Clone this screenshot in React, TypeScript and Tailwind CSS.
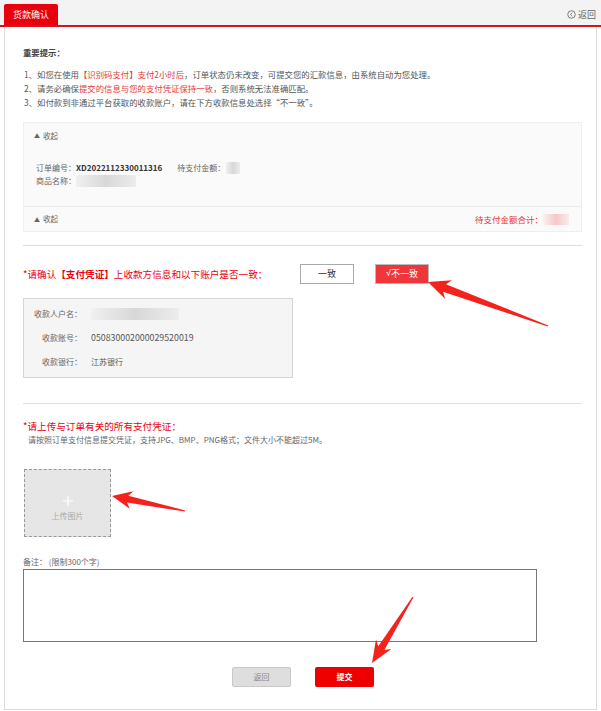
import React from 'react';

type Pt = [number, number];

// arrow polygon from tail to tip, tapering shaft + wide head
const arrowPoints = (tail: Pt, tip: Pt, headLen: number, headW: number, shaftW: number) => {
  const dx = tip[0] - tail[0];
  const dy = tip[1] - tail[1];
  const len = Math.hypot(dx, dy);
  const ux = dx / len;
  const uy = dy / len;
  const nx = -uy;
  const ny = ux;
  const bx = tip[0] - ux * headLen;
  const by = tip[1] - uy * headLen;
  const nbx = tip[0] - ux * headLen * 0.8;
  const nby = tip[1] - uy * headLen * 0.8;
  const pts: Pt[] = [
    tip,
    [bx + nx * headW, by + ny * headW],
    [nbx + nx * shaftW, nby + ny * shaftW],
    [tail[0] + nx * 0.6, tail[1] + ny * 0.6],
    [tail[0] - nx * 0.6, tail[1] - ny * 0.6],
    [nbx - nx * shaftW, nby - ny * shaftW],
    [bx - nx * headW, by - ny * headW],
  ];
  return pts.map((p) => `${p[0].toFixed(1)},${p[1].toFixed(1)}`).join(' ');
};

const Blur = ({ w, h = 11, className = '' }: { w: number; h?: number; className?: string }) => (
  <span
    className={`inline-block align-middle rounded-[2px] bg-gradient-to-r from-[#f0f0f0] via-[#d8d8d8] to-[#ececec] ${className}`}
    style={{ width: w, height: h }}
  />
);

const App: React.FC = () => {
  return (
    <div
      className="relative w-[601px] h-[711px] bg-white text-[#555] overflow-hidden"
      style={{ fontFamily: '"Noto Sans CJK SC", "Noto Sans", sans-serif' }}
    >
      {/* top tab bar */}
      <div className="h-[27px] bg-[#f3f3f3] border-b-2 border-[#d7141a] flex items-end justify-between">
        <div className="ml-[4px] h-[21px] w-[54px] bg-[#e8000f] rounded-t-[2px] flex items-center justify-center text-white text-[9px]">
          货款确认
        </div>
        <div className="self-center mt-[4px] mr-[5px] flex items-center gap-[2px] text-[9px] text-[#666]">
          <svg width="9" height="9" viewBox="0 0 10 10" fill="none" stroke="#666" strokeWidth="0.9">
            <circle cx="5" cy="5" r="4.2" />
            <path d="M5.8 3 L3.8 5 L5.8 7" />
          </svg>
          返回
        </div>
      </div>

      {/* main panel */}
      <div className="mx-[4px] h-[683px] border-x border-b border-[#dcdcdc] pl-[18px] pr-[14px] text-[8.4px]">
        <div className="pt-[18px] h-[14px] leading-[14px] box-content font-bold text-[#444]">重要提示：</div>
        <div className="mt-[8px] pl-[1px] leading-[14px] text-[#555]">
          <div>
            1、如您在使用<span className="text-[#e4393c]">【识别码支付】支付2小时后</span>，订单状态仍未改变，可提交您的汇款信息，由系统自动为您处理。
          </div>
          <div>
            2、请务必确保<span className="text-[#e4393c]">提交的信息与您的支付凭证保持一致</span>，否则系统无法准确匹配。
          </div>
          <div>3、如付款到非通过平台获取的收款账户，请在下方收款信息处选择“不一致”。</div>
        </div>

        {/* order box */}
        <div className="mt-[13px] h-[110px] bg-[#fafafa] border border-[#efefef] flex flex-col text-[#666]">
          <div className="h-[25px] flex items-center pl-[10px] text-[7.5px]">
            <span className="text-[6px] mr-[3px]">▲</span>收起
          </div>
          <div className="flex-1 pl-[12px] pt-[13px] leading-[13px] text-[8px]">
            <div className="flex items-center">
              <span>订单编号：</span>
              <span className="font-bold text-[#333]">XD2022112330011316</span>
              <span className="ml-[15px]">待支付金额：</span>
              <Blur w={14} h={12} className="ml-[1px]" />
            </div>
            <div className="flex items-center">
              <span>商品名称：</span>
              <Blur w={60} h={12} />
            </div>
          </div>
          <div className="h-[25px] border-t border-[#ececec] flex items-center justify-between pl-[10px] pr-[12px] text-[7.5px]">
            <span>
              <span className="text-[6px] mr-[3px]">▲</span>收起
            </span>
            <span className="flex items-center text-[#e4393c] text-[8.5px]">
              待支付金额合计：
              <span className="inline-block w-[26px] h-[11px] bg-gradient-to-r from-[#fdf0f0] via-[#f5c8c8] to-[#fbeaea]" />
            </span>
          </div>
        </div>

        <div className="mt-[13px] border-t border-[#dedede]" />

        {/* confirm row */}
        <div className="mt-[18px] h-[20px] flex items-center">
          <div className="w-[277px] text-[9.6px] text-[#e8000f]">
            *请确认<span className="font-bold">【支付凭证】</span>上收款方信息和以下账户是否一致：
          </div>
          <div className="w-[54px] h-[20px] border border-[#aaa] bg-white text-[#333] text-[9px] flex items-center justify-center">
            一致
          </div>
          <div className="ml-[21px] w-[54px] h-[20px] border border-[#bbb] bg-[#f0363a] text-white text-[9px] flex items-center justify-center">
            <span style={{ fontFamily: '"Liberation Sans", sans-serif' }}>√</span>不一致
          </div>
        </div>

        {/* account box */}
        <div className="mt-[14px] w-[270px] h-[80px] bg-[#f5f5f5] border border-[#d5d5d5] flex flex-col justify-center gap-[10px] text-[8px] text-[#666]">
          <div className="flex items-center h-[14px]">
            <span className="w-[67px] pl-[10px]">收款人户名：</span>
            <Blur w={88} h={12} />
          </div>
          <div className="flex items-center h-[14px]">
            <span className="w-[67px] pl-[18px]">收款账号：</span>
            <span className="text-[#555] text-[8.8px]">050830002000029520019</span>
          </div>
          <div className="flex items-center h-[14px]">
            <span className="w-[67px] pl-[18px]">收款银行：</span>
            <span className="text-[#555]">江苏银行</span>
          </div>
        </div>

        <div className="mt-[25px] border-t border-[#dedede]" />

        {/* upload */}
        <div className="mt-[15px] leading-[14px] text-[9.6px] text-[#e8000f]">*请上传与订单有关的所有支付凭证：</div>
        <div className="pl-[5px] leading-[14px] text-[8px] text-[#666]">
          请按照订单支付信息提交凭证，支持JPG、BMP、PNG格式；文件大小不能超过5M。
        </div>
        <div className="mt-[22px] ml-[1px] w-[87px] h-[68px] bg-[#e6e6e6] border border-dashed border-[#999] flex flex-col items-center justify-center gap-[4px]">
          <svg className="mt-[12px]" width="10" height="10" viewBox="0 0 10 10" stroke="#fff" strokeWidth="1.2">
            <path d="M5 0 V10 M0 5 H10" />
          </svg>
          <span className="text-[8px] text-[#aaa] leading-[12px]">上传图片</span>
        </div>

        {/* remark */}
        <div className="mt-[18px] leading-[14px] text-[8px] text-[#666]">
          备注：&nbsp;(限制300个字)
        </div>
        <div className="w-[514px] h-[73px] border border-[#777] bg-white" />

        <div className="mt-[25px] flex justify-center gap-[24px] pl-[1px]">
          <div className="w-[59px] h-[20px] rounded-[2px] bg-[#dedede] border border-[#c8c8c8] text-[#888] text-[8px] flex items-center justify-center">
            返回
          </div>
          <div className="w-[59px] h-[20px] rounded-[2px] bg-[#ee0000] text-white text-[8px] font-bold flex items-center justify-center">
            提交
          </div>
        </div>
      </div>

      {/* annotation arrows */}
      <svg className="absolute inset-0 pointer-events-none" width="601" height="711">
        <polygon points={arrowPoints([548, 326], [428, 282], 22, 10, 4)} fill="#f4221a" />
        <polygon points={arrowPoints([185, 511], [112, 496], 20, 9, 3.5)} fill="#f4221a" />
        <polygon points={arrowPoints([413, 597], [372, 663], 22, 9, 3.5)} fill="#f4221a" />
      </svg>
    </div>
  );
};

export default App;
